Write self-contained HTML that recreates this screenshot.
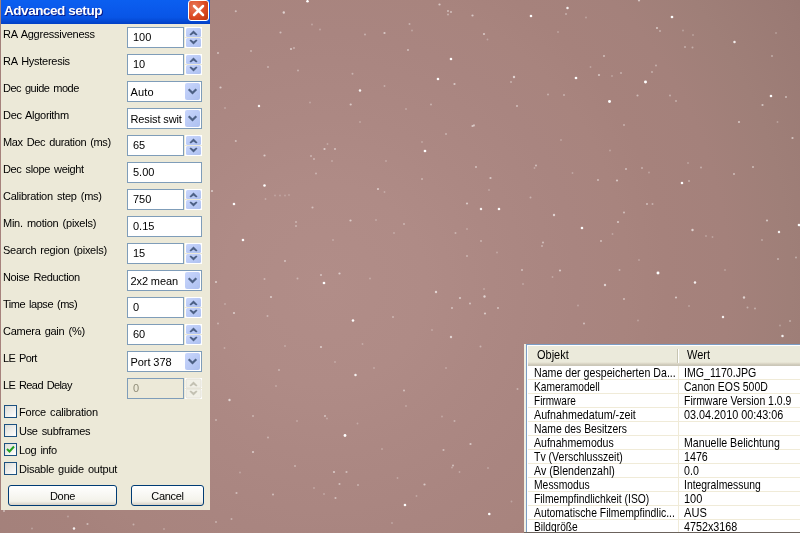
<!DOCTYPE html><html><head><meta charset="utf-8"><title>Advanced setup</title><style>
html,body{margin:0;padding:0}
body{width:800px;height:533px;overflow:hidden;position:relative;background:#a58481;font-family:"Liberation Sans",sans-serif;font-size:11px;color:#000}
#sky{position:absolute;left:0;top:0;width:800px;height:533px;background:radial-gradient(circle 560px at 325px 285px,#b18d88 0%,#af8b86 18%,#ac8883 30%,#a98580 45%,#a8847e 54%,#a6827c 61%,#a4817b 72%,#9f7f78 83%,#9a7a74 96%,#987872 100%)}
#stars{position:absolute;left:0;top:0;filter:blur(.5px)}
#dlg{will-change:transform;position:absolute;left:1px;top:0;width:209px;height:510px;background:#ece9d8}
#tb{position:absolute;left:0;top:0;width:209px;height:24px;background:linear-gradient(#0b5ff0 0%,#0a5aec 35%,#0855e6 72%,#0448d2 90%,#023fc4 100%)}
#tt{position:absolute;left:3px;top:3px;font:bold 13.5px/16px "Liberation Sans",sans-serif;color:#fff;text-shadow:1px 1px 0 #0a1883;white-space:nowrap;letter-spacing:-.45px}
#cl{position:absolute;left:187px;top:0px;width:19px;height:19px;border:1px solid #fff;border-radius:3px;background:radial-gradient(circle at 30% 30%,#e8795a 0%,#dc4a23 55%,#b9330f 100%)}
.lb{position:absolute;left:2px;white-space:nowrap;line-height:13px;height:13px}
.bx{position:absolute;left:126px;height:19px;border:1px solid #7f9db9;background:#fff}
.bx span{position:absolute;top:4px;line-height:13px;white-space:nowrap}
.sp{width:55px}.cb,.tx{width:73px}
.sp span,.tx span{left:5px;top:3px}.cb span{left:2.5px}
.dis{background:#ece9d8;color:#8f8c78}
.sb{position:absolute;left:184px;width:17px;height:21px}
.dd{position:absolute;right:1px;top:1px;width:15px;height:17px;border-radius:2px;background:linear-gradient(135deg,#c9d6fc,#adc0f0)}
.ck{position:absolute;left:3px;width:11px;height:11px;border:1px solid #1c5180;background:linear-gradient(135deg,#dcdcd7,#fff)}
.cl{position:absolute;left:18px;white-space:nowrap;line-height:13px}
.bt{position:absolute;height:19px;border:1px solid #003c74;border-radius:3px;background:linear-gradient(#fff 0%,#f3f2ea 80%,#d6d0c5 100%);text-align:center;line-height:21px;letter-spacing:-.3px}
#lst{will-change:transform;position:absolute;left:524px;top:344px;width:276px;height:189px;background:#fff}
#lst .fl{position:absolute;left:0;top:0;width:2px;height:189px;background:#f1efe2}
#lst .bl{position:absolute;left:2px;top:0;width:1px;height:189px;background:#7b9dc4}
#lst .bt2{position:absolute;left:2px;top:0;width:274px;height:1px;background:#7b9dc4}
#lst .bb{position:absolute;left:0;top:188px;width:276px;height:1px;background:#6b625c}
#hd{position:absolute;left:4px;top:2px;width:272px;height:20px;background:linear-gradient(#ebeadb 0px,#ebeadb 16px,#e2dece 17px,#d6d2c2 18px,#cbc7b8 19px,#cbc7b8 20px)}
#hd span{position:absolute;top:3px;line-height:13px;transform:scaleY(1.1);transform-origin:0 10px}
.hs{position:absolute;top:3px;width:1px;height:14px;background:#c7c5b2;box-shadow:1px 0 0 #fff}
.r{position:absolute;left:4px;width:272px;height:13px;border-bottom:1px solid #f0ebd8}
.r span{position:absolute;top:1px;line-height:13px;white-space:nowrap;transform:scaleY(1.1);transform-origin:0 10px}
.r .a{left:6px}.r .b{left:156px}
#vl{position:absolute;left:154px;top:22px;width:1px;height:167px;background:#f0ebd8}
</style></head><body>
<div id="sky"></div>
<svg id="stars" width="800" height="533" viewBox="0 0 800 533"><g fill="#fff"><circle cx="307.5" cy="1.3" r="1.32" opacity="1"/><circle cx="283.8" cy="12.5" r="1.17" opacity="0.63"/><circle cx="235.8" cy="11.3" r="1.05" opacity="0.45"/><circle cx="280.5" cy="32.5" r="1.05" opacity="0.45"/><circle cx="384.5" cy="33" r="1.11" opacity="0.54"/><circle cx="365" cy="34.5" r="0.99" opacity="0.36"/><circle cx="291" cy="49" r="1.11" opacity="0.54"/><circle cx="294" cy="48" r="0.99" opacity="0.36"/><circle cx="218" cy="53" r="1.05" opacity="0.45"/><circle cx="251" cy="51" r="0.99" opacity="0.36"/><circle cx="268" cy="67" r="0.99" opacity="0.36"/><circle cx="298" cy="70.5" r="0.99" opacity="0.36"/><circle cx="352.5" cy="73.7" r="0.99" opacity="0.36"/><circle cx="220.5" cy="87.5" r="1.11" opacity="0.54"/><circle cx="360" cy="90.5" r="1.23" opacity="0.88"/><circle cx="259" cy="106" r="1.23" opacity="0.88"/><circle cx="350.7" cy="104.5" r="1.11" opacity="0.54"/><circle cx="384.5" cy="86" r="0.96" opacity="0.32"/><circle cx="310" cy="102.5" r="0.93" opacity="0.27"/><circle cx="320" cy="29.5" r="0.93" opacity="0.27"/><circle cx="312" cy="24.5" r="0.93" opacity="0.27"/><circle cx="225" cy="108" r="0.93" opacity="0.27"/><circle cx="360" cy="122" r="0.93" opacity="0.27"/><circle cx="439.5" cy="4.5" r="1.11" opacity="0.54"/><circle cx="448" cy="11" r="1.05" opacity="0.45"/><circle cx="451" cy="12" r="1.05" opacity="0.45"/><circle cx="448" cy="14.5" r="0.99" opacity="0.36"/><circle cx="472.5" cy="15.5" r="1.11" opacity="0.54"/><circle cx="531" cy="16" r="1.29" opacity="0.99"/><circle cx="567.5" cy="8" r="1.23" opacity="0.88"/><circle cx="566" cy="14" r="0.99" opacity="0.36"/><circle cx="484" cy="34" r="1.11" opacity="0.54"/><circle cx="487.5" cy="39.5" r="0.93" opacity="0.27"/><circle cx="409.5" cy="24" r="0.99" opacity="0.36"/><circle cx="412" cy="30.5" r="0.93" opacity="0.27"/><circle cx="408" cy="50" r="1.05" opacity="0.45"/><circle cx="451" cy="59" r="1.29" opacity="0.99"/><circle cx="438" cy="79" r="1.29" opacity="0.99"/><circle cx="454.5" cy="84" r="1.11" opacity="0.54"/><circle cx="514" cy="77" r="1.17" opacity="0.63"/><circle cx="511" cy="82" r="0.99" opacity="0.36"/><circle cx="576" cy="78" r="1.35" opacity="1"/><circle cx="599" cy="75" r="1.11" opacity="0.54"/><circle cx="517" cy="106" r="1.05" opacity="0.45"/><circle cx="548" cy="94.5" r="0.99" opacity="0.36"/><circle cx="564" cy="95" r="0.99" opacity="0.36"/><circle cx="431" cy="104.5" r="0.99" opacity="0.36"/><circle cx="406" cy="109" r="0.93" opacity="0.27"/><circle cx="472.5" cy="126" r="1.11" opacity="0.54"/><circle cx="474" cy="125.4" r="1.05" opacity="0.45"/><circle cx="590.5" cy="67" r="0.93" opacity="0.27"/><circle cx="586" cy="17.5" r="0.93" opacity="0.27"/><circle cx="558" cy="32" r="0.93" opacity="0.27"/><circle cx="639" cy="0.5" r="1.11" opacity="0.54"/><circle cx="672" cy="17" r="1.35" opacity="1"/><circle cx="657" cy="28" r="1.11" opacity="0.54"/><circle cx="660" cy="31" r="0.99" opacity="0.36"/><circle cx="683" cy="30.5" r="0.93" opacity="0.27"/><circle cx="693" cy="35" r="0.93" opacity="0.27"/><circle cx="734.5" cy="42" r="1.23" opacity="0.88"/><circle cx="685" cy="47" r="0.99" opacity="0.36"/><circle cx="692.5" cy="47.5" r="0.99" opacity="0.36"/><circle cx="604" cy="56" r="1.05" opacity="0.45"/><circle cx="772" cy="56" r="0.99" opacity="0.36"/><circle cx="776" cy="33" r="0.93" opacity="0.27"/><circle cx="656" cy="65.5" r="0.99" opacity="0.36"/><circle cx="652" cy="72" r="0.99" opacity="0.36"/><circle cx="621" cy="73" r="0.99" opacity="0.36"/><circle cx="612" cy="76" r="0.93" opacity="0.27"/><circle cx="645.5" cy="82" r="1.47" opacity="1"/><circle cx="609.5" cy="101.5" r="1.47" opacity="1"/><circle cx="637.5" cy="95.5" r="1.05" opacity="0.45"/><circle cx="670" cy="95.5" r="0.99" opacity="0.36"/><circle cx="676" cy="101" r="0.99" opacity="0.36"/><circle cx="771" cy="96" r="1.29" opacity="0.99"/><circle cx="786" cy="97" r="1.05" opacity="0.45"/><circle cx="762.5" cy="105" r="1.11" opacity="0.54"/><circle cx="739" cy="122" r="1.11" opacity="0.54"/><circle cx="624" cy="125" r="0.99" opacity="0.36"/><circle cx="777.5" cy="122" r="0.93" opacity="0.27"/><circle cx="235.8" cy="141" r="1.05" opacity="0.45"/><circle cx="264.5" cy="155.5" r="1.11" opacity="0.54"/><circle cx="324.5" cy="149" r="1.11" opacity="0.54"/><circle cx="335" cy="149" r="1.05" opacity="0.45"/><circle cx="327.5" cy="144" r="0.93" opacity="0.27"/><circle cx="311" cy="156" r="0.99" opacity="0.36"/><circle cx="314" cy="159" r="0.99" opacity="0.36"/><circle cx="332" cy="161" r="0.93" opacity="0.27"/><circle cx="316" cy="173.5" r="0.99" opacity="0.36"/><circle cx="264.5" cy="185.5" r="1.29" opacity="0.99"/><circle cx="212" cy="191" r="1.11" opacity="0.54"/><circle cx="234" cy="204" r="1.29" opacity="0.99"/><circle cx="265.5" cy="199" r="0.93" opacity="0.27"/><circle cx="275" cy="195.5" r="0.9" opacity="0.23"/><circle cx="280" cy="195.5" r="0.9" opacity="0.23"/><circle cx="285" cy="195.5" r="0.9" opacity="0.23"/><circle cx="289" cy="195" r="0.9" opacity="0.23"/><circle cx="312.5" cy="207.5" r="1.05" opacity="0.45"/><circle cx="378" cy="189" r="1.11" opacity="0.54"/><circle cx="384.5" cy="192" r="0.93" opacity="0.27"/><circle cx="350.5" cy="220.5" r="1.11" opacity="0.54"/><circle cx="296" cy="222" r="0.99" opacity="0.36"/><circle cx="296" cy="226" r="0.99" opacity="0.36"/><circle cx="376" cy="220" r="0.93" opacity="0.27"/><circle cx="243" cy="240" r="1.29" opacity="0.99"/><circle cx="333" cy="240" r="0.93" opacity="0.27"/><circle cx="285" cy="261" r="1.05" opacity="0.45"/><circle cx="394" cy="233" r="0.93" opacity="0.27"/><circle cx="386" cy="161" r="0.93" opacity="0.27"/><circle cx="425" cy="151" r="1.35" opacity="1"/><circle cx="446" cy="134" r="0.99" opacity="0.36"/><circle cx="422" cy="142" r="0.93" opacity="0.27"/><circle cx="476" cy="167" r="1.05" opacity="0.45"/><circle cx="490.5" cy="178" r="1.11" opacity="0.54"/><circle cx="536" cy="165.5" r="1.05" opacity="0.45"/><circle cx="534.5" cy="168" r="0.93" opacity="0.27"/><circle cx="422" cy="179" r="0.99" opacity="0.36"/><circle cx="467" cy="203.5" r="1.11" opacity="0.54"/><circle cx="481" cy="209" r="1.23" opacity="0.88"/><circle cx="499" cy="209" r="1.29" opacity="0.99"/><circle cx="530.5" cy="197.5" r="0.99" opacity="0.36"/><circle cx="554" cy="215" r="1.17" opacity="0.63"/><circle cx="582" cy="228" r="1.29" opacity="0.99"/><circle cx="598" cy="180" r="1.05" opacity="0.45"/><circle cx="404" cy="224" r="0.99" opacity="0.36"/><circle cx="455.5" cy="233" r="0.99" opacity="0.36"/><circle cx="467" cy="229" r="0.93" opacity="0.27"/><circle cx="481" cy="241" r="0.99" opacity="0.36"/><circle cx="543" cy="242.5" r="1.05" opacity="0.45"/><circle cx="542" cy="246" r="0.99" opacity="0.36"/><circle cx="561" cy="140" r="0.93" opacity="0.27"/><circle cx="467" cy="256" r="0.99" opacity="0.36"/><circle cx="497" cy="252.5" r="0.93" opacity="0.27"/><circle cx="489" cy="190" r="0.93" opacity="0.27"/><circle cx="572.5" cy="173" r="0.93" opacity="0.27"/><circle cx="792.5" cy="138" r="1.11" opacity="0.54"/><circle cx="753" cy="167" r="1.05" opacity="0.45"/><circle cx="734" cy="174" r="1.05" opacity="0.45"/><circle cx="701" cy="167.5" r="0.99" opacity="0.36"/><circle cx="688" cy="163" r="0.93" opacity="0.27"/><circle cx="682" cy="183" r="1.29" opacity="0.99"/><circle cx="689" cy="181" r="0.99" opacity="0.36"/><circle cx="626" cy="169" r="1.05" opacity="0.45"/><circle cx="642" cy="168" r="0.99" opacity="0.36"/><circle cx="649" cy="172.5" r="0.93" opacity="0.27"/><circle cx="617" cy="180.5" r="1.11" opacity="0.54"/><circle cx="647" cy="204" r="1.05" opacity="0.45"/><circle cx="652.5" cy="204" r="0.99" opacity="0.36"/><circle cx="624" cy="212.5" r="1.05" opacity="0.45"/><circle cx="618" cy="222" r="1.11" opacity="0.54"/><circle cx="692.5" cy="230" r="1.17" opacity="0.63"/><circle cx="767" cy="220.5" r="1.11" opacity="0.54"/><circle cx="779" cy="232" r="1.23" opacity="0.88"/><circle cx="799" cy="225" r="1.29" opacity="0.99"/><circle cx="712.5" cy="237" r="0.93" opacity="0.27"/><circle cx="706" cy="236" r="0.93" opacity="0.27"/><circle cx="762" cy="240" r="0.96" opacity="0.32"/><circle cx="778" cy="259" r="1.02" opacity="0.41"/><circle cx="601" cy="241" r="1.05" opacity="0.45"/><circle cx="612.5" cy="234" r="0.93" opacity="0.27"/><circle cx="610" cy="150.5" r="0.93" opacity="0.27"/><circle cx="324" cy="283" r="1.35" opacity="1"/><circle cx="321" cy="275" r="1.05" opacity="0.45"/><circle cx="339.5" cy="273.5" r="1.11" opacity="0.54"/><circle cx="297.5" cy="278.5" r="0.99" opacity="0.36"/><circle cx="264.5" cy="279" r="0.99" opacity="0.36"/><circle cx="216" cy="282" r="1.11" opacity="0.54"/><circle cx="370" cy="278.5" r="0.93" opacity="0.27"/><circle cx="271" cy="297" r="1.11" opacity="0.54"/><circle cx="234" cy="313" r="1.11" opacity="0.54"/><circle cx="267.5" cy="316" r="0.99" opacity="0.36"/><circle cx="218" cy="323.5" r="0.99" opacity="0.36"/><circle cx="353" cy="320.5" r="1.29" opacity="0.99"/><circle cx="393" cy="317" r="0.99" opacity="0.36"/><circle cx="321" cy="347" r="1.11" opacity="0.54"/><circle cx="285" cy="346" r="0.93" opacity="0.27"/><circle cx="335" cy="362" r="0.93" opacity="0.27"/><circle cx="355.5" cy="375" r="1.23" opacity="0.88"/><circle cx="279" cy="370" r="0.99" opacity="0.36"/><circle cx="225" cy="304" r="0.93" opacity="0.27"/><circle cx="224.5" cy="348" r="0.93" opacity="0.27"/><circle cx="362.5" cy="344" r="0.93" opacity="0.27"/><circle cx="374" cy="368" r="0.93" opacity="0.27"/><circle cx="276" cy="386" r="0.93" opacity="0.27"/><circle cx="436" cy="292" r="1.17" opacity="0.63"/><circle cx="460" cy="298" r="1.11" opacity="0.54"/><circle cx="484.5" cy="296.5" r="1.17" opacity="0.63"/><circle cx="470" cy="303.5" r="1.05" opacity="0.45"/><circle cx="452" cy="308" r="1.05" opacity="0.45"/><circle cx="498" cy="308" r="1.05" opacity="0.45"/><circle cx="485" cy="313.5" r="1.11" opacity="0.54"/><circle cx="451" cy="337" r="1.17" opacity="0.63"/><circle cx="522" cy="270" r="1.05" opacity="0.45"/><circle cx="560" cy="270.5" r="1.11" opacity="0.54"/><circle cx="523" cy="284" r="0.93" opacity="0.27"/><circle cx="584" cy="323.5" r="1.05" opacity="0.45"/><circle cx="578" cy="305.5" r="0.93" opacity="0.27"/><circle cx="480.5" cy="346.5" r="0.99" opacity="0.36"/><circle cx="432" cy="330" r="0.93" opacity="0.27"/><circle cx="446" cy="368" r="0.93" opacity="0.27"/><circle cx="404" cy="390.5" r="1.05" opacity="0.45"/><circle cx="517.5" cy="389" r="0.99" opacity="0.36"/><circle cx="552.5" cy="277" r="0.93" opacity="0.27"/><circle cx="484" cy="289" r="0.93" opacity="0.27"/><circle cx="658" cy="273" r="1.47" opacity="1"/><circle cx="695" cy="282.5" r="1.23" opacity="0.88"/><circle cx="605" cy="285" r="1.17" opacity="0.63"/><circle cx="676" cy="297.5" r="1.11" opacity="0.54"/><circle cx="744" cy="297.5" r="1.17" opacity="0.63"/><circle cx="723" cy="317" r="1.23" opacity="0.88"/><circle cx="782.5" cy="336" r="1.23" opacity="0.88"/><circle cx="796" cy="257.5" r="0.99" opacity="0.36"/><circle cx="747.5" cy="307.5" r="0.99" opacity="0.36"/><circle cx="755" cy="308.5" r="0.99" opacity="0.36"/><circle cx="624" cy="299" r="1.05" opacity="0.45"/><circle cx="619.5" cy="270" r="0.99" opacity="0.36"/><circle cx="639" cy="260" r="0.93" opacity="0.27"/><circle cx="689" cy="306" r="0.93" opacity="0.27"/><circle cx="790" cy="321" r="0.99" opacity="0.36"/><circle cx="780" cy="325.5" r="0.93" opacity="0.27"/><circle cx="638" cy="320.5" r="0.93" opacity="0.27"/><circle cx="725" cy="270" r="0.93" opacity="0.27"/><circle cx="345" cy="435.5" r="1.41" opacity="1"/><circle cx="229.5" cy="400" r="1.17" opacity="0.63"/><circle cx="325" cy="416" r="1.05" opacity="0.45"/><circle cx="327" cy="418.5" r="0.93" opacity="0.27"/><circle cx="253" cy="416" r="0.99" opacity="0.36"/><circle cx="216" cy="420" r="0.99" opacity="0.36"/><circle cx="268" cy="437.5" r="0.99" opacity="0.36"/><circle cx="253" cy="452" r="1.11" opacity="0.54"/><circle cx="357.5" cy="423.5" r="0.93" opacity="0.27"/><circle cx="382" cy="449" r="0.93" opacity="0.27"/><circle cx="295" cy="466" r="0.99" opacity="0.36"/><circle cx="334" cy="472" r="1.11" opacity="0.54"/><circle cx="346.5" cy="472" r="1.05" opacity="0.45"/><circle cx="339.5" cy="484" r="1.05" opacity="0.45"/><circle cx="358" cy="485" r="0.99" opacity="0.36"/><circle cx="335.5" cy="498" r="1.05" opacity="0.45"/><circle cx="273" cy="494.5" r="1.05" opacity="0.45"/><circle cx="236.5" cy="493" r="1.05" opacity="0.45"/><circle cx="240" cy="472.5" r="0.93" opacity="0.27"/><circle cx="231.5" cy="519" r="0.99" opacity="0.36"/><circle cx="216" cy="522" r="0.99" opacity="0.36"/><circle cx="314" cy="488" r="0.93" opacity="0.27"/><circle cx="324" cy="494" r="0.93" opacity="0.27"/><circle cx="392" cy="523" r="0.93" opacity="0.27"/><circle cx="297" cy="421" r="0.93" opacity="0.27"/><circle cx="405" cy="505" r="1.29" opacity="0.99"/><circle cx="489.3" cy="514" r="1.29" opacity="0.99"/><circle cx="424.5" cy="484.5" r="1.11" opacity="0.54"/><circle cx="443.5" cy="450" r="1.05" opacity="0.45"/><circle cx="470.5" cy="444" r="1.11" opacity="0.54"/><circle cx="454.5" cy="421" r="0.99" opacity="0.36"/><circle cx="453" cy="465.5" r="1.05" opacity="0.45"/><circle cx="452" cy="467.5" r="0.93" opacity="0.27"/><circle cx="459.5" cy="472" r="0.93" opacity="0.27"/><circle cx="406" cy="406" r="0.93" opacity="0.27"/><circle cx="397.5" cy="478" r="0.93" opacity="0.27"/><circle cx="511.5" cy="501.5" r="0.93" opacity="0.27"/><circle cx="488" cy="468" r="0.93" opacity="0.27"/><circle cx="442" cy="416.5" r="0.93" opacity="0.27"/><circle cx="416.5" cy="496" r="0.93" opacity="0.27"/><circle cx="74" cy="528.5" r="1.23" opacity="0.88"/><circle cx="87.5" cy="524" r="1.05" opacity="0.45"/><circle cx="133.5" cy="524.5" r="0.99" opacity="0.36"/><circle cx="68" cy="516.5" r="0.93" opacity="0.27"/><circle cx="4" cy="511" r="1.05" opacity="0.45"/><circle cx="164" cy="529" r="0.93" opacity="0.27"/><circle cx="32" cy="528.5" r="0.93" opacity="0.27"/></g></svg>
<div id="dlg"><div id="tb"><div id="tt">Advanced setup</div><div id="cl"><svg width="19" height="19" viewBox="0 0 19 19"><path d="M5 5L14 14M14 5L5 14" stroke="#fff" stroke-width="2.5" stroke-linecap="round"/></svg></div></div>
<div class="lb" style="top:28px;letter-spacing:-0.252px;word-spacing:1.3px">RA Aggressiveness</div>
<div class="bx sp" style="top:27px"><span>100</span></div>
<svg class="sb" style="top:27px" width="17" height="21" viewBox="0 0 17 21"><defs><linearGradient id="g0" x1="0" y1="0" x2="1" y2="1"><stop offset="0" stop-color="#c9d6fc"/><stop offset="1" stop-color="#adc0f0"/></linearGradient></defs><rect width="17" height="21" fill="#fff"/><rect x="0" y="10" width="17" height="1" fill="#ece9d8"/><rect x="1" y="1" width="15" height="9" rx="1.5" fill="url(#g0)" opacity="1"/><rect x="1" y="11" width="15" height="9" rx="1.5" fill="url(#g0)" opacity="1"/><path d="M8.5 3.5L12.5 7.4L11.2 8.6L8.5 6.5L5.8 8.6L4.5 7.4ZM8.5 17.5L12.5 13.6L11.2 12.4L8.5 14.5L5.8 12.4L4.5 13.6Z" fill="#4d6185"/></svg>
<div class="lb" style="top:55px;letter-spacing:-0.275px;word-spacing:1.3px">RA Hysteresis</div>
<div class="bx sp" style="top:54px"><span>10</span></div>
<svg class="sb" style="top:54px" width="17" height="21" viewBox="0 0 17 21"><defs><linearGradient id="g1" x1="0" y1="0" x2="1" y2="1"><stop offset="0" stop-color="#c9d6fc"/><stop offset="1" stop-color="#adc0f0"/></linearGradient></defs><rect width="17" height="21" fill="#fff"/><rect x="0" y="10" width="17" height="1" fill="#ece9d8"/><rect x="1" y="1" width="15" height="9" rx="1.5" fill="url(#g1)" opacity="1"/><rect x="1" y="11" width="15" height="9" rx="1.5" fill="url(#g1)" opacity="1"/><path d="M8.5 3.5L12.5 7.4L11.2 8.6L8.5 6.5L5.8 8.6L4.5 7.4ZM8.5 17.5L12.5 13.6L11.2 12.4L8.5 14.5L5.8 12.4L4.5 13.6Z" fill="#4d6185"/></svg>
<div class="lb" style="top:82px;letter-spacing:-0.494px;word-spacing:1.3px">Dec guide mode</div>
<div class="bx cb" style="top:81px"><span style="letter-spacing:0.140px">Auto</span><div class="dd"><svg width="15" height="17" viewBox="0 0 15 17"><path d="M3.7 6.2L7.5 10L11.3 6.2" fill="none" stroke="#4d6185" stroke-width="2.2"/></svg></div></div>
<div class="lb" style="top:109px;letter-spacing:-0.306px;word-spacing:1.3px">Dec Algorithm</div>
<div class="bx cb" style="top:108px"><span style="letter-spacing:-0.124px">Resist swit</span><div class="dd"><svg width="15" height="17" viewBox="0 0 15 17"><path d="M3.7 6.2L7.5 10L11.3 6.2" fill="none" stroke="#4d6185" stroke-width="2.2"/></svg></div></div>
<div class="lb" style="top:136px;letter-spacing:-0.351px;word-spacing:1.3px">Max Dec duration (ms)</div>
<div class="bx sp" style="top:135px"><span>65</span></div>
<svg class="sb" style="top:135px" width="17" height="21" viewBox="0 0 17 21"><defs><linearGradient id="g4" x1="0" y1="0" x2="1" y2="1"><stop offset="0" stop-color="#c9d6fc"/><stop offset="1" stop-color="#adc0f0"/></linearGradient></defs><rect width="17" height="21" fill="#fff"/><rect x="0" y="10" width="17" height="1" fill="#ece9d8"/><rect x="1" y="1" width="15" height="9" rx="1.5" fill="url(#g4)" opacity="1"/><rect x="1" y="11" width="15" height="9" rx="1.5" fill="url(#g4)" opacity="1"/><path d="M8.5 3.5L12.5 7.4L11.2 8.6L8.5 6.5L5.8 8.6L4.5 7.4ZM8.5 17.5L12.5 13.6L11.2 12.4L8.5 14.5L5.8 12.4L4.5 13.6Z" fill="#4d6185"/></svg>
<div class="lb" style="top:163px;letter-spacing:-0.349px;word-spacing:1.3px">Dec slope weight</div>
<div class="bx tx" style="top:162px"><span>5.00</span></div>
<div class="lb" style="top:190px;letter-spacing:-0.252px;word-spacing:1.3px">Calibration step (ms)</div>
<div class="bx sp" style="top:189px"><span>750</span></div>
<svg class="sb" style="top:189px" width="17" height="21" viewBox="0 0 17 21"><defs><linearGradient id="g6" x1="0" y1="0" x2="1" y2="1"><stop offset="0" stop-color="#c9d6fc"/><stop offset="1" stop-color="#adc0f0"/></linearGradient></defs><rect width="17" height="21" fill="#fff"/><rect x="0" y="10" width="17" height="1" fill="#ece9d8"/><rect x="1" y="1" width="15" height="9" rx="1.5" fill="url(#g6)" opacity="1"/><rect x="1" y="11" width="15" height="9" rx="1.5" fill="url(#g6)" opacity="1"/><path d="M8.5 3.5L12.5 7.4L11.2 8.6L8.5 6.5L5.8 8.6L4.5 7.4ZM8.5 17.5L12.5 13.6L11.2 12.4L8.5 14.5L5.8 12.4L4.5 13.6Z" fill="#4d6185"/></svg>
<div class="lb" style="top:217px;letter-spacing:-0.243px;word-spacing:1.3px">Min. motion (pixels)</div>
<div class="bx tx" style="top:216px"><span>0.15</span></div>
<div class="lb" style="top:244px;letter-spacing:-0.264px;word-spacing:1.3px">Search region (pixels)</div>
<div class="bx sp" style="top:243px"><span>15</span></div>
<svg class="sb" style="top:243px" width="17" height="21" viewBox="0 0 17 21"><defs><linearGradient id="g8" x1="0" y1="0" x2="1" y2="1"><stop offset="0" stop-color="#c9d6fc"/><stop offset="1" stop-color="#adc0f0"/></linearGradient></defs><rect width="17" height="21" fill="#fff"/><rect x="0" y="10" width="17" height="1" fill="#ece9d8"/><rect x="1" y="1" width="15" height="9" rx="1.5" fill="url(#g8)" opacity="1"/><rect x="1" y="11" width="15" height="9" rx="1.5" fill="url(#g8)" opacity="1"/><path d="M8.5 3.5L12.5 7.4L11.2 8.6L8.5 6.5L5.8 8.6L4.5 7.4ZM8.5 17.5L12.5 13.6L11.2 12.4L8.5 14.5L5.8 12.4L4.5 13.6Z" fill="#4d6185"/></svg>
<div class="lb" style="top:271px;letter-spacing:-0.348px;word-spacing:1.3px">Noise Reduction</div>
<div class="bx cb" style="top:270px"><span style="letter-spacing:-0.114px">2x2 mean</span><div class="dd"><svg width="15" height="17" viewBox="0 0 15 17"><path d="M3.7 6.2L7.5 10L11.3 6.2" fill="none" stroke="#4d6185" stroke-width="2.2"/></svg></div></div>
<div class="lb" style="top:298px;letter-spacing:-0.463px;word-spacing:1.3px">Time lapse (ms)</div>
<div class="bx sp" style="top:297px"><span>0</span></div>
<svg class="sb" style="top:297px" width="17" height="21" viewBox="0 0 17 21"><defs><linearGradient id="g10" x1="0" y1="0" x2="1" y2="1"><stop offset="0" stop-color="#c9d6fc"/><stop offset="1" stop-color="#adc0f0"/></linearGradient></defs><rect width="17" height="21" fill="#fff"/><rect x="0" y="10" width="17" height="1" fill="#ece9d8"/><rect x="1" y="1" width="15" height="9" rx="1.5" fill="url(#g10)" opacity="1"/><rect x="1" y="11" width="15" height="9" rx="1.5" fill="url(#g10)" opacity="1"/><path d="M8.5 3.5L12.5 7.4L11.2 8.6L8.5 6.5L5.8 8.6L4.5 7.4ZM8.5 17.5L12.5 13.6L11.2 12.4L8.5 14.5L5.8 12.4L4.5 13.6Z" fill="#4d6185"/></svg>
<div class="lb" style="top:325px;letter-spacing:-0.263px;word-spacing:1.3px">Camera gain (%)</div>
<div class="bx sp" style="top:324px"><span>60</span></div>
<svg class="sb" style="top:324px" width="17" height="21" viewBox="0 0 17 21"><defs><linearGradient id="g11" x1="0" y1="0" x2="1" y2="1"><stop offset="0" stop-color="#c9d6fc"/><stop offset="1" stop-color="#adc0f0"/></linearGradient></defs><rect width="17" height="21" fill="#fff"/><rect x="0" y="10" width="17" height="1" fill="#ece9d8"/><rect x="1" y="1" width="15" height="9" rx="1.5" fill="url(#g11)" opacity="1"/><rect x="1" y="11" width="15" height="9" rx="1.5" fill="url(#g11)" opacity="1"/><path d="M8.5 3.5L12.5 7.4L11.2 8.6L8.5 6.5L5.8 8.6L4.5 7.4ZM8.5 17.5L12.5 13.6L11.2 12.4L8.5 14.5L5.8 12.4L4.5 13.6Z" fill="#4d6185"/></svg>
<div class="lb" style="top:352px;letter-spacing:-0.598px;word-spacing:1.3px">LE Port</div>
<div class="bx cb" style="top:351px"><span style="letter-spacing:-0.074px">Port 378</span><div class="dd"><svg width="15" height="17" viewBox="0 0 15 17"><path d="M3.7 6.2L7.5 10L11.3 6.2" fill="none" stroke="#4d6185" stroke-width="2.2"/></svg></div></div>
<div class="lb" style="top:379px;letter-spacing:-0.600px;word-spacing:1.3px">LE Read Delay</div>
<div class="bx sp dis" style="top:378px"><span>0</span></div>
<svg class="sb" style="top:378px" width="17" height="21" viewBox="0 0 17 21"><defs><linearGradient id="g13" x1="0" y1="0" x2="1" y2="1"><stop offset="0" stop-color="#c9d6fc"/><stop offset="1" stop-color="#adc0f0"/></linearGradient></defs><rect width="17" height="21" fill="#fff"/><rect x="0" y="10" width="17" height="1" fill="#ece9d8"/><rect x="1" y="1" width="15" height="9" rx="1.5" fill="#f1f0e7" stroke="#e4e2d8" stroke-width="1" opacity="1"/><rect x="1" y="11" width="15" height="9" rx="1.5" fill="#f1f0e7" stroke="#e4e2d8" stroke-width="1" opacity="1"/><path d="M8.5 3.5L12.5 7.4L11.2 8.6L8.5 6.5L5.8 8.6L4.5 7.4ZM8.5 17.5L12.5 13.6L11.2 12.4L8.5 14.5L5.8 12.4L4.5 13.6Z" fill="#c3c1b3"/></svg>
<div class="ck" style="top:405px"></div><div class="cl" style="top:406px;letter-spacing:-0.225px;word-spacing:1.3px">Force calibration</div>
<div class="ck" style="top:424px"></div><div class="cl" style="top:425px;letter-spacing:-0.314px;word-spacing:1.3px">Use subframes</div>
<div class="ck" style="top:443px"><svg width="11" height="11" viewBox="0 0 11 11" style="position:absolute;left:0;top:0"><path d="M2 5L4.5 7.5L9 2.5" fill="none" stroke="#21a121" stroke-width="2"/></svg></div><div class="cl" style="top:444px;letter-spacing:-0.332px;word-spacing:1.3px">Log info</div>
<div class="ck" style="top:462px"></div><div class="cl" style="top:463px;letter-spacing:-0.240px;word-spacing:1.3px">Disable guide output</div>
<div class="bt" style="left:7px;top:485px;width:107px">Done</div>
<div class="bt" style="left:130px;top:485px;width:71px">Cancel</div>
</div>
<div id="lst"><div class="fl"></div><div class="bl"></div><div class="bt2"></div><div id="hd"><span style="left:9px;transform:scale(1.000,1.1)">Objekt</span><span style="left:159px">Wert</span><div class="hs" style="left:149px"></div></div>
<div class="r" style="top:22px"><span class="a" style="transform:scale(0.966,1.1)">Name der gespeicherten Da...</span><span class="b" style="transform:scale(0.964,1.1)">IMG_1170.JPG</span></div>
<div class="r" style="top:36px"><span class="a" style="transform:scale(0.928,1.1)">Kameramodell</span><span class="b" style="transform:scale(0.952,1.1)">Canon EOS 500D</span></div>
<div class="r" style="top:50px"><span class="a" style="transform:scale(0.912,1.1)">Firmware</span><span class="b" style="transform:scale(0.949,1.1)">Firmware Version 1.0.9</span></div>
<div class="r" style="top:64px"><span class="a" style="transform:scale(0.974,1.1)">Aufnahmedatum/-zeit</span><span class="b" style="transform:scale(0.984,1.1)">03.04.2010 00:43:06</span></div>
<div class="r" style="top:78px"><span class="a" style="transform:scale(0.943,1.1)">Name des Besitzers</span><span class="b" style=""></span></div>
<div class="r" style="top:92px"><span class="a" style="transform:scale(0.959,1.1)">Aufnahmemodus</span><span class="b" style="transform:scale(0.967,1.1)">Manuelle Belichtung</span></div>
<div class="r" style="top:106px"><span class="a" style="transform:scale(0.956,1.1)">Tv (Verschlusszeit)</span><span class="b" style="transform:scale(0.972,1.1)">1476</span></div>
<div class="r" style="top:120px"><span class="a" style="transform:scale(0.967,1.1)">Av (Blendenzahl)</span><span class="b" style="transform:scale(0.968,1.1)">0.0</span></div>
<div class="r" style="top:134px"><span class="a" style="transform:scale(0.941,1.1)">Messmodus</span><span class="b" style="transform:scale(0.944,1.1)">Integralmessung</span></div>
<div class="r" style="top:148px"><span class="a" style="transform:scale(0.938,1.1)">Filmempfindlichkeit (ISO)</span><span class="b" style="">100</span></div>
<div class="r" style="top:162px"><span class="a" style="transform:scale(0.944,1.1)">Automatische Filmempfindlic...</span><span class="b" style="transform:scale(1.008,1.1)">AUS</span></div>
<div class="r" style="top:176px"><span class="a" style="transform:scale(0.930,1.1)">Bildgröße</span><span class="b" style="transform:scale(0.979,1.1)">4752x3168</span></div>
<div id="vl"></div><div class="bb"></div></div>
</body></html>
